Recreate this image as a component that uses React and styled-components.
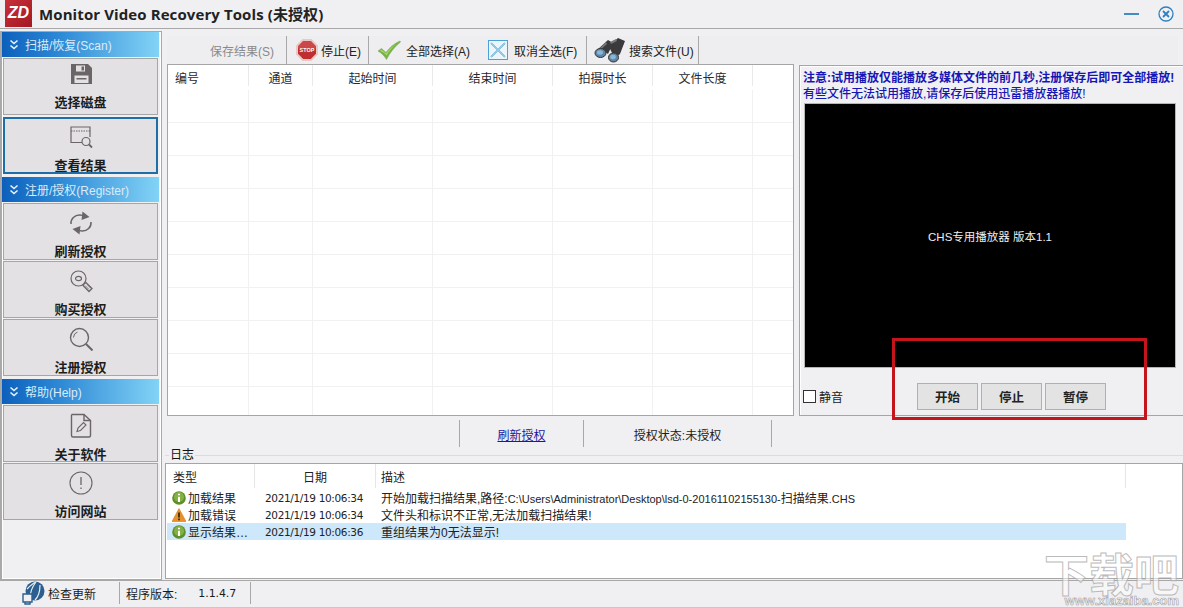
import React from "react";
import styled, { createGlobalStyle } from "styled-components";

const CJK = `"Liberation Sans", "Noto Sans CJK SC", sans-serif`;
const INK = "#1c1c1c";
const ICON = "#6b6568";

const Global = createGlobalStyle`
  html, body { margin: 0; padding: 0; background: #f0eff2; }
  * { box-sizing: border-box; }
  body { font-family: ${CJK}; font-size: 12px; color: ${INK}; overflow: hidden; }
`;

const Page = styled.div`
  position: relative; width: 1183px; height: 608px; display: flex; flex-direction: column;
  background: #f0eff2; overflow: hidden;
`;
const TitleBar = styled.header`
  height: 29px; flex: none; display: flex; align-items: center; padding: 0 9px 1px 5px;
  border-bottom: 1px solid #a8a8a8; background: #f0f0f2;
`;
const Logo = styled.div`
  width: 27px; height: 27px; margin-top: -1px; background: linear-gradient(135deg, #c8313a, #a31822);
  color: #fff; font: italic bold 16px "Liberation Sans", sans-serif; display: flex; align-items: center; justify-content: center;
`;
const AppTitle = styled.h1`
  margin: 0 0 0 7px; flex: 1; font: bold 15px "Open Sans", "Noto Sans CJK SC", sans-serif; color: #222; letter-spacing: .1px; white-space: nowrap;
`;
const WinButtons = styled.div`display: flex; align-items: center; gap: 19px;`;
const Body = styled.div`flex: 1; display: flex; min-height: 0;`;
const Sidebar = styled.nav`
  width: 162px; flex: none; margin-top: 2px; border: 1px solid #a9a9a9; border-left-width: 2px; padding: 0 2px 0 0;
  box-shadow: inset 0 0 0 1px #fff; display: flex; flex-direction: column;
`;
const SectionHead = styled.div`
  height: 25px; flex: none; display: flex; align-items: center; gap: 5px; padding-left: 6px; margin: ${p => p.$gap || 0}px 0 1px;
  background: linear-gradient(90deg, #0c60bc 0%, #2f8ad6 38%, #82d3f6 100%);
  color: #dcebf6; font-size: 12px; white-space: nowrap;
`;
const SideBtn = styled.button`
  display: flex; flex-direction: column; align-items: center; justify-content: flex-start; overflow: hidden;
  width: 155px; height: 57px; margin: ${p => p.$active ? 1 : 0}px 0 1px 1px; padding: ${p => p.$first ? 3 : p.$active ? 6 : 7}px 0 0;
  background: #e3e1e3; border: ${p => p.$active ? "2px solid #1f6fa6" : "1px solid #a6a6a6"};
  font: bold 13px/19px ${CJK}; color: #1d1d1d; flex: none;
  svg { flex: none; margin-bottom: 7px; }
`;
const Main = styled.main`flex: 1; min-width: 0; display: flex; flex-direction: column; padding-top: 7px;`;
const Toolbar = styled.div`
  height: 28px; flex: none; margin: 0 5px 0 5px; display: flex; align-items: stretch; background: #eeeef0; color: #222;
`;
const ToolBtn = styled.div`
  width: ${p => p.$w}px; display: flex; align-items: center; gap: ${p => p.$g ?? 3}px; padding-left: ${p => p.$pad}px; white-space: nowrap;
  border-right: ${p => p.$sep ? "1px solid #a8a8a8" : "0"}; color: ${p => p.$off ? "#8a8a8a" : "#222"}; font-size: 12px;
`;
const Workspace = styled.div`height: 352px; flex: none; display: flex; padding-left: 5px;`;
const Table = styled.div`
  width: 627px; flex: none; background: #fff; border: 1px solid #a5a5a5; overflow: hidden;
`;
const Row = styled.div`
  display: grid; grid-template-columns: 81px 64px 120px 120px 100px 100px 1fr; height: ${p => p.$h}px;
  ${p => p.$line ? "border-bottom: 1px solid #f1f1f1;" : ""}
`;
const HeadCell = styled.div`
  border-right: 1px solid #e9e9e9; text-align: ${p => p.$left ? "left" : "center"}; padding: 4px 0 0 ${p => p.$left ? 7 : 0}px;
  margin-bottom: 5px; font-size: 12px; color: #2a2a2a;
  &:last-child { border-right: 0; }
`;
const BodyCell = styled.div`
  border-right: 1px solid #f1f1f1;
  &:last-child { border-right: 0; }
`;
const Player = styled.section`
  width: 384px; flex: none; margin-left: 5px; margin-top: 1px; border: 1px solid #a5a5a5; border-right: 0; padding: 1px 0 0 2px;
  box-shadow: inset 1px 1px 0 #fff; display: flex; flex-direction: column;
`;
const Notice = styled.p`
  margin: ${p => p.$first ? 3 : 0}px 0 0 1px; font-size: 12px; line-height: 16px; color: #1616b4; white-space: nowrap; font-weight: ${p => p.$bold ? 700 : 500};
`;
const Screen = styled.div`
  width: 372px; height: 265px; flex: none; margin: 1px 0 0 2px; background: #000; border: 1px solid #b5b5b5;
  color: #eee; font-size: 11.5px; display: flex; align-items: center; justify-content: center;
`;
const Controls = styled.div`display: flex; align-items: center; height: 46px; flex: none; padding: 10px 0 0 1px;`;
const Box = styled.span`width: 13px; height: 13px; flex: none; background: #fff; border: 1px solid #333; margin-right: 3px;`;
const Mute = styled.label`display: flex; align-items: center; width: 114px; font-size: 12px; color: #222;`;
const PlayerBtn = styled.button`
  width: 61px; height: 27px; margin-right: 3px; background: #e3e3e3; border: 1px solid #b0b0b0; font: bold 12.5px ${CJK}; color: #222; padding: 0;
`;
const InfoBar = styled.div`
  height: 27px; flex: none; margin-top: 4px; padding-left: 297px; display: flex; align-items: stretch;
`;
const InfoCell = styled.div`
  width: ${p => p.$w}px; border-left: 1px solid #a8a8a8; ${p => p.$end ? "border-right: 1px solid #a8a8a8;" : ""}
  display: flex; align-items: center; justify-content: center; font-size: 12px; padding-top: 2px;
`;
const Link = styled.a`color: #1a1a9e; text-decoration: underline;`;
const LogGroup = styled.section`flex: 1; min-height: 0; display: flex; flex-direction: column; padding-left: 3px; margin-bottom: 1px;`;
const LogTitle = styled.div`
  height: 16px; flex: none; display: flex; align-items: center; gap: 1px; font-size: 12px; color: #111; line-height: 14px;
  &::before { content: ""; width: 4px; height: 1px; background: #dcdcdc; }
  &::after { content: ""; flex: 1; height: 1px; background: #dcdcdc; }
`;
const LogBox = styled.div`height: 116px; flex: none; background: #fff; border: 1px solid #a5a5a5; overflow: hidden; padding-left: 1px;`;
const LogRow = styled.div`
  display: grid; grid-template-columns: 88px 121px 750px; width: 959px; height: 17px; align-items: center;
  background: ${p => p.$sel ? "#cde7fb" : "transparent"}; white-space: nowrap;
`;
const LogHead = styled.div`
  height: 24px; border-right: 1px solid #e6e6e6; display: flex; align-items: center;
  justify-content: ${p => p.$c ? "center" : "flex-start"}; padding-left: ${p => p.$c ? 0 : p.$pad}px; color: #222;
`;
const TypeCell = styled.div`display: flex; align-items: center; gap: 2px; padding-left: 5px; font-size: 12px; color: #222;`;
const DateCell = styled.div`font: 10.5px "DejaVu Sans", sans-serif; letter-spacing: -0.35px; padding-left: 10px; color: #222;`;
const MsgCell = styled.div`padding-left: 5px; font-size: 12px; color: #222;`;
const PathText = styled.span`font-size: 11px;`;
const LogHeadRow = styled.div`display: grid; grid-template-columns: 88px 121px 750px 1fr; height: 25px;`;
const StatusBar = styled.footer`
  height: 28px; flex: none; border-top: 1px solid #a8a8a8; border-bottom: 1px solid #c8c8c8; display: flex; align-items: stretch; background: #f0eff2;
`;
const StatusCell = styled.div`
  width: ${p => p.$w}px; border-right: 1px solid #a8a8a8; display: flex; align-items: center; padding-left: ${p => p.$pad}px; gap: ${p => p.$gap || 0}px; margin: 1px 0 3px;
`;
const Version = styled.span`font: 11px "DejaVu Sans", sans-serif; margin-left: 21px; letter-spacing: -.1px;`;
const Annotation = styled.div`
  position: absolute; left: 892px; top: 338px; width: 255px; height: 82px; border: 3px solid #c4141c; pointer-events: none;
`;
const Watermark = styled.div`
  position: absolute; right: 4px; bottom: 0; width: 135px; text-align: center; pointer-events: none; line-height: 1;
`;
const WmBig = styled.div`
  font: bold 45px/40px "Noto Sans CJK SC", sans-serif; color: rgba(255,255,255,.55); -webkit-text-stroke: 1px rgba(165,165,165,.75); white-space: nowrap;
`;
const WmSmall = styled.div`
  font: bold 13px/15px "Liberation Sans", sans-serif; color: rgba(255,255,255,.5); -webkit-text-stroke: .6px rgba(150,150,150,.9); text-align: right; white-space: nowrap;
`;

const Chevrons = () => (
  <svg width="12" height="12" viewBox="0 0 12 12" fill="none" stroke="#e8f2fa" strokeWidth="1.6">
    <path d="M2.5 1.5 6 4.5l3.5-3M2.5 6.5 6 9.5l3.5-3" />
  </svg>
);
const IconSave = () => (
  <svg width="24" height="24" viewBox="0 0 24 24">
    <path fill={ICON} d="M2 2h17l4 4v16H2z" />
    <path fill="#e3e1e3" d="M7 3.5h9v6H7zM5.5 13.5h14V21h-14z" />
    <path fill={ICON} d="M12.5 4.500h2.500v4h-2.500zM7.500 16h10v1.500h-10z" />
  </svg>
);
const IconWindow = () => (
  <svg width="24" height="24" viewBox="0 0 24 24" fill="none" stroke={ICON} strokeWidth="1.200">
    <path d="M13 17.500H2V2h19v10" />
    <path d="M2 6h19" strokeDasharray="1.500 1" />
    <circle cx="17" cy="16.500" r="4" />
    <path d="m20 19.500 3 3" strokeWidth="1.800" />
  </svg>
);
const IconRefresh = () => (
  <svg width="24" height="24" viewBox="0 0 24 24" fill="none" stroke={ICON} strokeWidth="1.500">
    <path d="M2 13C1.500 7.500 6 4 10.500 4c2.200 0 4.500.5 6 1.500" />
    <path fill={ICON} stroke="none" d="M13.500.5l7 5.500-8 3z" />
    <path d="M22 11c.5 5.500-4 9-8.500 9-2.200 0-4.500-.5-6-1.500" />
    <path fill={ICON} stroke="none" d="M10.500 23.500l-7-5.500 8-3z" />
  </svg>
);
const IconKey = () => (
  <svg width="24" height="24" viewBox="0 0 24 24" fill="none" stroke={ICON} strokeWidth="1.200">
    <circle cx="9.500" cy="9.500" r="7.500" />
    <ellipse cx="9.500" cy="9.500" rx="3" ry="2.200" />
    <path d="m15 15 2-1.500 6 6-3 3-6-6z" strokeWidth="1.300" />
    <path d="m16 16.500 4 4M18 15.500l4 4" strokeWidth=".8" />
  </svg>
);
const IconSearch = () => (
  <svg width="24" height="24" viewBox="0 0 24 24" fill="none" stroke={ICON} strokeWidth="1.400">
    <circle cx="10.500" cy="10.500" r="9" />
    <path d="M4.500 10.500a6 6 0 0 1 4-5.500" strokeWidth="1" />
    <path d="m17 17 6.500 6.500" strokeWidth="2" />
  </svg>
);
const IconDoc = () => (
  <svg width="24" height="25" viewBox="0 0 24 25" fill="none" stroke={ICON} strokeWidth="1.400">
    <path d="M3 1.500h12l6.500 6v15a1.500 1.500 0 0 1-1.500 1.500H4a1.500 1.500 0 0 1-1.500-1.500v-19A2 2 0 0 1 3 1.500z" />
    <path d="M15 1.500v6h6.500" />
    <path d="m8 18.500 1-3.500 5.500-5.500 2.500 2.500-5.500 5.500z" strokeWidth="1.100" />
  </svg>
);
const IconInfoCircle = () => (
  <svg width="24" height="24" viewBox="0 0 24 24" fill="none" stroke={ICON} strokeWidth="1.100">
    <circle cx="12" cy="12" r="11" />
    <path d="M12 6v8" strokeWidth="1.300" />
    <path d="M12 16.500v1.500" strokeWidth="1.300" />
  </svg>
);
const IconStop = () => (
  <svg width="22" height="22" viewBox="0 0 22 22">
    <path fill="#e9c9c6" d="M6.500 0h9L22 6.500v9L15.500 22h-9L0 15.500v-9z" />
    <path fill="#bf2e30" d="M7.200 2h7.600L20 7.200v7.600L14.800 20H7.200L2 14.800V7.200z" />
    <path fill="#d65a58" d="M7.200 2h7.600L20 7.200v2H2v-2z" opacity=".6" />
    <text x="11" y="13" textAnchor="middle" fontSize="5.500" fontWeight="700" fontFamily="Liberation Sans" fill="#fff">STOP</text>
  </svg>
);
const IconCheck = () => (
  <svg width="24" height="20" viewBox="0 0 24 20">
    <path fill="#75b53d" stroke="#8aa870" strokeWidth=".6" d="M1 11l3.500-2.500L9 12.500C12 8 17 3.500 23 1l.5 1C17.500 7 13 12.500 9.500 19.500c-2-3.500-5-6.500-8.500-8.500z" />
    <path fill="#a9d873" d="M3 10.800l1.500-1L9 13.500C12 9.500 15 6.500 19 4c-4 3.500-7 7-9.500 11.500C8 13.500 5.500 12 3 10.800z" />
  </svg>
);
const IconCross = () => (
  <svg width="20" height="20" viewBox="0 0 20 20">
    <rect x=".5" y=".5" width="19" height="19" fill="#eaf5fc" stroke="#4aa3d8" />
    <path d="M3 3l14 14M17 3 3 17" stroke="#4a9fd2" strokeWidth="1.600" />
    <path d="M3 3l14 14M17 3 3 17" stroke="#e8f6ff" strokeWidth=".5" />
  </svg>
);
const IconBinoculars = () => (
  <svg width="32" height="26" viewBox="0 0 32 26">
    <path fill="#3a3a3c" d="M3 13 14 3l5 3-5 11-4-3-4 3zM15 9l9-8 7 3-5 13-5 4-4-7z" />
    <path fill="#77777a" d="M16 5l6-3 1 2-6 3zM5 12l7-7 1 2-7 6z" />
    <ellipse cx="6.500" cy="16" rx="5.500" ry="4.500" fill="#5c87a8" stroke="#333" />
    <ellipse cx="19.500" cy="20.500" rx="5" ry="4.500" fill="#5c87a8" stroke="#333" />
    <ellipse cx="6" cy="15.500" rx="3" ry="2.200" fill="#8fb6d0" />
    <ellipse cx="19" cy="20" rx="2.800" ry="2.200" fill="#8fb6d0" />
  </svg>
);
const IconClose = () => (
  <svg width="16" height="16" viewBox="0 0 16 16" fill="none" stroke="#2f80bf" strokeWidth="1.300">
    <circle cx="8" cy="8" r="7" />
    <path d="m5 5 6 6M11 5l-6 6" strokeWidth="1.800" />
  </svg>
);
const IconMin = () => (
  <svg width="15" height="16" viewBox="0 0 15 16"><path d="M0 8h15" stroke="#2f80bf" strokeWidth="1.800" /></svg>
);
const GreenInfo = () => (
  <svg width="14" height="14" viewBox="0 0 14 14">
    <circle cx="7" cy="7" r="6.800" fill="#5f8f2a" />
    <circle cx="7" cy="6" r="5" fill="#84b145" />
    <path d="M7 2.800v1.400M7 5.800V11" stroke="#fff" strokeWidth="2" />
  </svg>
);
const Warn = () => (
  <svg width="14" height="14" viewBox="0 0 14 14">
    <path d="M7 .5 14 13.500H0z" fill="#e8912a" stroke="#c97a1f" strokeWidth=".6" strokeLinejoin="round" />
    <path d="M7 4.500v5M7 10.500v1.700" stroke="#3a2a12" strokeWidth="1.800" />
  </svg>
);
const IconUpdate = () => (
  <svg width="24" height="24" viewBox="0 0 24 24">
    <circle cx="14" cy="10" r="9.500" fill="#2c5f8f" />
    <path d="M6 8c3-3 6-6 9-7M9 18c0-6 2-12 6-17M14 19c3-3 5-7 5-15" stroke="#e8f0f6" strokeWidth="1.200" fill="none" />
    <path d="M2 13h9v8H2z M4 21v2h5v-2" fill="#f0eff2" stroke="#2c5f8f" strokeWidth="1.400" />
  </svg>
);

const headers = ["编号", "通道", "起始时间", "结束时间", "拍摄时长", "文件长度", ""];
const logs = [
  { icon: <GreenInfo />, type: "加载结果", date: "2021/1/19 10:06:34", msg: <>开始加载扫描结果,路径:<PathText>C:\Users\Administrator\Desktop\lsd-0-20161102155130-</PathText>扫描结果<PathText>.CHS</PathText></> },
  { icon: <Warn />, type: "加载错误", date: "2021/1/19 10:06:34", msg: "文件头和标识不正常,无法加载扫描结果!" },
  { icon: <GreenInfo />, type: "显示结果…", date: "2021/1/19 10:06:36", msg: "重组结果为0无法显示!", sel: true },
];

export default function App() {
  return (
    <Page>
      <Global />
      <TitleBar>
        <Logo>ZD</Logo>
        <AppTitle>Monitor Video Recovery Tools (未授权)</AppTitle>
        <WinButtons><IconMin /><IconClose /></WinButtons>
      </TitleBar>
      <Body>
        <Sidebar>
          <SectionHead><Chevrons />扫描/恢复(Scan)</SectionHead>
          <SideBtn $first><IconSave />选择磁盘</SideBtn>
          <SideBtn $active><IconWindow />查看结果</SideBtn>
          <SectionHead $gap={2}><Chevrons />注册/授权(Register)</SectionHead>
          <SideBtn><IconRefresh />刷新授权</SideBtn>
          <SideBtn><IconKey />购买授权</SideBtn>
          <SideBtn><IconSearch />注册授权</SideBtn>
          <SectionHead $gap={2}><Chevrons />帮助(Help)</SectionHead>
          <SideBtn><IconDoc />关于软件</SideBtn>
          <SideBtn><IconInfoCircle />访问网站</SideBtn>
        </Sidebar>
        <Main>
          <Toolbar>
            <ToolBtn $w={120} $pad={43} $sep $off>保存结果(S)</ToolBtn>
            <ToolBtn $w={82} $pad={9} $sep><IconStop />停止(E)</ToolBtn>
            <ToolBtn $w={109} $pad={8} $g={5}><IconCheck />全部选择(A)</ToolBtn>
            <ToolBtn $w={109} $pad={10} $g={6} $sep><IconCross />取消全选(F)</ToolBtn>
            <ToolBtn $w={112} $pad={7} $g={3} $sep><IconBinoculars />搜索文件(U)</ToolBtn>
          </Toolbar>
          <Workspace>
            <Table>
              <Row $h={25}>
                {headers.map((h, i) => <HeadCell key={i} $left={i === 0}>{h}</HeadCell>)}
              </Row>
              {Array.from({ length: 10 }, (_, r) => (
                <Row key={r} $h={33} $line>{headers.map((_, i) => <BodyCell key={i} />)}</Row>
              ))}
            </Table>
            <Player>
              <Notice $bold $first>注意:试用播放仅能播放多媒体文件的前几秒,注册保存后即可全部播放!</Notice>
              <Notice>有些文件无法试用播放,请保存后使用迅雷播放器播放!</Notice>
              <Screen>CHS专用播放器 版本1.1</Screen>
              <Controls>
                <Mute><Box />静音</Mute>
                <PlayerBtn>开始</PlayerBtn>
                <PlayerBtn>停止</PlayerBtn>
                <PlayerBtn>暂停</PlayerBtn>
              </Controls>
            </Player>
          </Workspace>
          <InfoBar>
            <InfoCell $w={124}><Link>刷新授权</Link></InfoCell>
            <InfoCell $w={189} $end>授权状态:未授权</InfoCell>
          </InfoBar>
          <LogGroup>
            <LogTitle>日志</LogTitle>
            <LogBox>
              <LogHeadRow>
                <LogHead $pad={6}>类型</LogHead>
                <LogHead $c>日期</LogHead>
                <LogHead $pad={5}>描述</LogHead>
              </LogHeadRow>
              {logs.map((l, i) => (
                <LogRow key={i} $sel={l.sel}>
                  <TypeCell>{l.icon}{l.type}</TypeCell>
                  <DateCell>{l.date}</DateCell>
                  <MsgCell>{l.msg}</MsgCell>
                </LogRow>
              ))}
            </LogBox>
          </LogGroup>
        </Main>
      </Body>
      <StatusBar>
        <StatusCell $w={120} $pad={21} $gap={3}><IconUpdate />检查更新</StatusCell>
        <StatusCell $w={131} $pad={6}>程序版本:<Version>1.1.4.7</Version></StatusCell>
      </StatusBar>
      <Annotation />
      <Watermark>
        <WmBig>下载吧</WmBig>
        <WmSmall>www.xiazaiba.com</WmSmall>
      </Watermark>
    </Page>
  );
}
